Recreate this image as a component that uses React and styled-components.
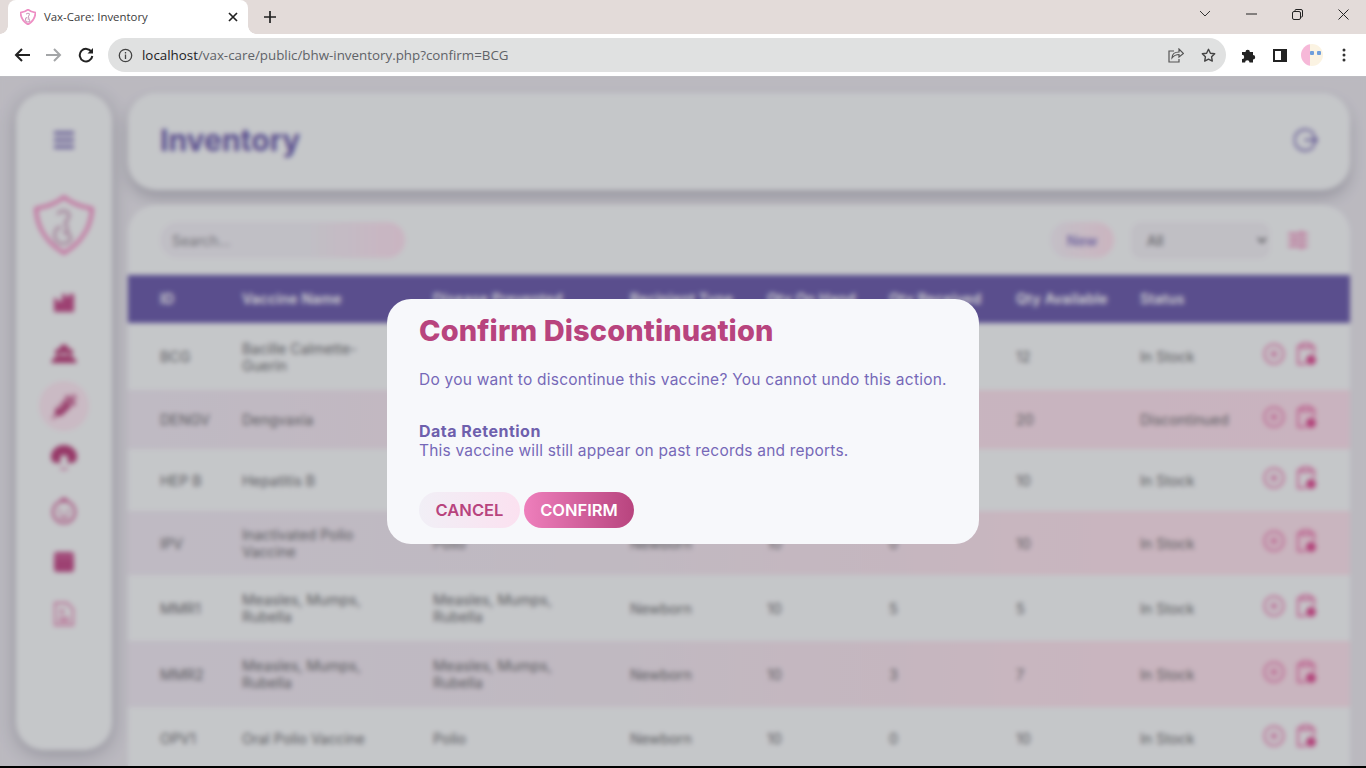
import React from 'react';
import styled, { createGlobalStyle, css } from 'styled-components';
import { FaSyringe } from 'react-icons/fa';

const PINK = '#ee7fbc';
const ROSE = '#b8447e';
const VIOLET = '#6e60ad';

const Global = createGlobalStyle`
  html, body { margin: 0; padding: 0; height: 100%; overflow: hidden; background: #000; }
  * { box-sizing: border-box; }
  body { font-family: Inter, "Liberation Sans", sans-serif; }
`;

const Shell = styled.div`
  width: 1366px;
  height: 766px;
  display: flex;
  flex-direction: column;
  overflow: hidden;
`;

/* browser chrome */
const TabStrip = styled.div`
  height: 34px;
  background: #e3dbd9;
  display: flex;
  align-items: flex-end;
  padding-left: 8px;
  flex: none;
`;
const Tab = styled.div`
  position: relative;
  width: 240px;
  height: 34px;
  background: #fff;
  border-radius: 8px 8px 0 0;
  display: flex;
  align-items: center;
  padding: 0 10px 0 12px;
  gap: 8px;
  font: 11.4px "Open Sans", "Liberation Sans", sans-serif;
  color: #3c3c3c;
  &::before,
  &::after {
    content: '';
    position: absolute;
    bottom: 0;
    width: 8px;
    height: 8px;
  }
  &::before {
    left: -8px;
    background: radial-gradient(circle at 0 0, #e3dbd9 7.5px, #fff 8px);
  }
  &::after {
    right: -8px;
    background: radial-gradient(circle at 100% 0, #e3dbd9 7.5px, #fff 8px);
  }
`;
const TabTitle = styled.span`
  flex: 1;
  padding-bottom: 2px;
`;
const NewTab = styled.div`
  width: 20px;
  height: 34px;
  margin-left: 12px;
  display: flex;
  align-items: center;
  justify-content: center;
`;
const WindowControls = styled.div`
  margin-left: auto;
  height: 34px;
  display: flex;
  align-items: flex-start;
`;
const WinButton = styled.div`
  width: 46px;
  height: 28px;
  display: flex;
  align-items: center;
  justify-content: center;
`;
const Toolbar = styled.div`
  height: 42px;
  background: #fff;
  display: flex;
  align-items: center;
  padding: 0 0 0 6px;
  flex: none;
`;
const NavButton = styled.div`
  width: 32px;
  height: 32px;
  display: flex;
  align-items: center;
  justify-content: center;
`;
const AddressBar = styled.div`
  width: 1118px;
  height: 34px;
  margin-left: 6px;
  border-radius: 17px;
  background: #e0e1e1;
  display: flex;
  align-items: center;
  padding: 0 2px 0 10px;
`;
const Url = styled.div`
  flex: 1;
  margin-left: 9px;
  font: 13.35px "Open Sans", "Liberation Sans", sans-serif;
  color: #5f6368;
  white-space: nowrap;
  b { font-weight: 400; color: #202124; }
`;
const BarIcon = styled.div`
  width: 32px;
  height: 28px;
  display: flex;
  align-items: center;
  justify-content: center;
`;
const Extensions = styled.div`
  display: flex;
  align-items: center;
  margin-left: 6px;
`;
const ExtIcon = styled.div`
  width: 32px;
  height: 32px;
  display: flex;
  align-items: center;
  justify-content: center;
`;
const Avatar = styled.div`
  width: 22px;
  height: 22px;
  border-radius: 50%;
  background: linear-gradient(90deg, #f6b8d8 0 42%, #fbf3e2 42%);
  position: relative;
  &::after {
    content: '';
    position: absolute;
    left: 9px;
    top: 6px;
    width: 11px;
    height: 6px;
    background: radial-gradient(circle at 2px 3px, #6f9fdc 2px, transparent 2.5px),
      radial-gradient(circle at 9px 3px, #6f9fdc 2px, transparent 2.5px);
  }
`;

/* dashboard */
const Viewport = styled.div`
  position: relative;
  flex: 1;
  min-height: 0;
  overflow: hidden;
  border-top: 1px solid #bdbdc2;
`;
const Page = styled.div`
  height: 100%;
  background: #e4e2ea;
  padding: 16px 16px 0;
  display: flex;
  gap: 16px;
  align-items: flex-start;
`;
const Sidebar = styled.aside`
  width: 96px;
  height: 657px;
  flex: none;
  background: #f1f3f6;
  border-radius: 28px;
  box-shadow: 0 4px 18px rgba(60, 60, 80, 0.3);
  display: flex;
  flex-direction: column;
  align-items: center;
  padding-top: 38px;
  color: ${VIOLET};
`;
const Logo = styled.div`
  margin: 46px 0 17px;
  height: 64px;
`;
const NavSlot = styled.div`
  width: 50px;
  height: 52px;
  display: flex;
  align-items: center;
  justify-content: center;
  color: ${ROSE};
  font-size: 25px;
  ${(p) =>
    p.$active &&
    css`
      background: #f7e3ef;
      border-radius: 50%;
      height: 50px;
      margin: 1px 0;
    `}
`;
const Main = styled.main`
  width: 1222px;
  flex: none;
  display: flex;
  flex-direction: column;
  gap: 15px;
`;
const HeaderCard = styled.header`
  height: 97px;
  background: #f1f3f6;
  border-radius: 28px;
  box-shadow: 0 8px 14px rgba(60, 60, 80, 0.24);
  display: flex;
  align-items: center;
  justify-content: space-between;
  padding: 0 32px 4px 32px;
`;
const PageTitle = styled.h1`
  margin: 0;
  font: 700 30px Inter, sans-serif;
  color: ${VIOLET};
`;
const ListCard = styled.section`
  background: #f1f3f6;
  border-radius: 28px 28px 0 0;
`;
const ListTools = styled.div`
  height: 70px;
  display: flex;
  align-items: center;
  padding: 0 42px 0 32px;
`;
const Search = styled.input`
  width: 245px;
  height: 36px;
  border: 0;
  outline: 0;
  border-radius: 18px;
  padding: 0 12px;
  background: linear-gradient(90deg, #ebe9f1 60%, #f7dcec);
  font: 14px Inter, sans-serif;
  &::placeholder { color: #8a8a90; }
`;
const NewButton = styled.div`
  margin-left: auto;
  width: 64px;
  height: 36px;
  border-radius: 18px;
  background: linear-gradient(90deg, #eeeaf3, #f8dcea);
  color: #8b7ec4;
  font: 600 14px Inter, sans-serif;
  display: flex;
  align-items: center;
  justify-content: center;
`;
const Select = styled.select`
  width: 139px;
  height: 37px;
  margin: 0 18px 0 17px;
  border: 0;
  border-radius: 10px;
  background: #ebe9f0;
  padding: 0 14px 0 12px;
  font: 14px Inter, sans-serif;
  color: #6a6a70;
`;
const columns = '82px 191px 197px 137px 122px 127px 124px 123px 1fr';
const HeadRow = styled.div`
  height: 48px;
  background: #6e60ad;
  display: grid;
  grid-template-columns: ${columns};
  align-items: center;
  padding: 0 0 2px 32px;
  color: #fff;
  font: 600 14px Inter, sans-serif;
  letter-spacing: 0.2px;
  white-space: nowrap;
`;
const BodyRow = styled.div`
  height: ${(p) => p.$h}px;
  display: grid;
  grid-template-columns: ${columns};
  align-items: center;
  padding-left: 32px;
  font: 14.3px/17px Inter, sans-serif;
  color: #6f6f74;
  ${(p) =>
    p.$alt &&
    css`
      background: linear-gradient(90deg, #e9e3ee, #ebe2ec 40%, #f6dde9 80%);
    `}
  ${(p) =>
    p.$gone &&
    css`
      background: linear-gradient(90deg, #e9e3ee, #f4dde9 60%, #f6dbe9);
    `}
`;
const WrapCell = styled.span`
  max-width: 132px;
`;
const Actions = styled.div`
  display: flex;
  align-items: center;
  gap: 10px;
  margin-top: -5px;
`;

/* dialog */
const Backdrop = styled.div`
  position: absolute;
  inset: 0;
  background: rgba(0, 0, 0, 0.18);
  backdrop-filter: blur(2.5px);
  display: flex;
  align-items: center;
  justify-content: center;
`;
const Dialog = styled.div`
  width: 592px;
  height: 245px;
  background: #f7f8fb;
  border-radius: 24px;
  padding: 14px 32px 16px;
  display: flex;
  flex-direction: column;
`;
const DialogTitle = styled.h2`
  margin: 0;
  font: 800 29px/36px Inter, sans-serif;
  letter-spacing: 0.1px;
  color: ${ROSE};
`;
const DialogText = styled.p`
  margin: 21px 0 0;
  font: 400 15.5px/20px Inter, sans-serif;
  letter-spacing: 0.23px;
  color: #7668b8;
  white-space: nowrap;
`;
const Retention = styled.div`
  margin-top: 31px;
  font: 400 15.5px/20px Inter, sans-serif;
  letter-spacing: 0.2px;
  color: #7668b8;
  white-space: nowrap;
  strong {
    display: block;
    font-size: 16px;
    font-weight: 700;
    letter-spacing: 0.5px;
    color: ${VIOLET};
  }
`;
const DialogButtons = styled.div`
  display: flex;
  gap: 4px;
  margin-top: auto;
`;
const Pill = styled.button`
  height: 36px;
  border: 0;
  border-radius: 18px;
  padding: 0;
  width: ${(p) => p.$w}px;
  font: 600 16.5px Inter, sans-serif;
  color: ${(p) => (p.$primary ? '#fff' : ROSE)};
  background: ${(p) =>
    p.$primary
      ? `linear-gradient(90deg, ${PINK}, ${ROSE})`
      : 'linear-gradient(90deg, #f1eff6, #fbe1f0)'};
`;

const rows = [
  { id: 'BCG', name: 'Bacille Calmette-Guerin', dis: 'Tuberculosis', type: 'Newborn', hand: 12, rec: 0, av: 12, st: 'In Stock', h: 67 },
  { id: 'DENGV', name: 'Dengvaxia', dis: 'Dengue', type: 'Children', hand: 20, rec: 0, av: 20, st: 'Discontinued', h: 59, gone: true },
  { id: 'HEP B', name: 'Hepatitis B', dis: 'Hepatitis B', type: 'Newborn', hand: 10, rec: 0, av: 10, st: 'In Stock', h: 62 },
  { id: 'IPV', name: 'Inactivated Polio Vaccine', dis: 'Polio', type: 'Newborn', hand: 10, rec: 0, av: 10, st: 'In Stock', h: 64, alt: true },
  { id: 'MMR1', name: 'Measles, Mumps, Rubella', dis: 'Measles, Mumps, Rubella', type: 'Newborn', hand: 10, rec: 5, av: 5, st: 'In Stock', h: 66 },
  { id: 'MMR2', name: 'Measles, Mumps, Rubella', dis: 'Measles, Mumps, Rubella', type: 'Newborn', hand: 10, rec: 3, av: 7, st: 'In Stock', h: 66, alt: true },
  { id: 'OPV1', name: 'Oral Polio Vaccine', dis: 'Polio', type: 'Newborn', hand: 10, rec: 0, av: 10, st: 'In Stock', h: 62 },
];

const Shield = ({ size, stroke, weight, inner }) => (
  <svg width={size} height={size} viewBox="0 0 62 62" fill="none" stroke={stroke} strokeLinejoin="round">
    <path d="M31 2 C38 8 48 12 60 14 C59 34 48 50 31 60 C14 50 3 34 2 14 C14 12 24 8 31 2Z" strokeWidth={weight} />
    <path d="M25 19 C31 13 41 19 34 26 C29 30 37 33 34 39 M27 33 C17 37 21 52 32 50 C41 48 39 39 31 39" strokeWidth={inner} strokeLinecap="round" stroke="#c9a0bc" />
  </svg>
);

const AddIcon = () => (
  <svg width="22" height="22" viewBox="0 0 22 22" fill="none" stroke={'#e46fa9'} strokeWidth="1.8" strokeLinecap="round">
    <circle cx="11" cy="11" r="9.6" />
    <path d="M11 7.500v7M7.500 11h7" />
  </svg>
);

const DiscontinueIcon = () => (
  <svg width="22" height="24" viewBox="0 0 22 24" fill="none" stroke={'#e46fa9'} strokeWidth="2" strokeLinejoin="round">
    <path d="M7 4H3v18h8M15 4h4v8" />
    <path d="M7 6V1.500h8V6z" />
    <circle cx="16" cy="18" r="5" fill={'#d94f93'} stroke="none" />
  </svg>
);

const LogoutIcon = () => (
  <svg width="24" height="24" viewBox="0 0 24 24" fill="none" stroke={VIOLET} strokeWidth="1.800" strokeLinecap="round" strokeLinejoin="round">
    <path d="M20 6.500a10.500 10.500 0 1 0 0 11" />
    <path d="M11 12h12M19.500 8.500 23 12l-3.500 3.500" />
  </svg>
);

const ChartIcon = () => (
  <svg width="20" height="20" viewBox="0 0 20 20" fill="#c0508c">
    <path d="M0 20V6h3v3h5V2h4v3h3V2h5v18z" />
  </svg>
);

const PeopleIcon = () => (
  <svg width="26" height="20" viewBox="0 0 26 20" fill={ROSE}>
    <circle cx="13" cy="5" r="4.500" />
    <circle cx="7" cy="8" r="3" />
    <circle cx="19" cy="8" r="3" />
    <path d="M0 19c1-3 2-4 4-6 2-2 16-2 18 0 2 2 3 3 4 6z" />
  </svg>
);

const MotherIcon = () => (
  <svg width="26" height="28" viewBox="0 0 26 28">
    <path fill={ROSE} d="M13 1C6 1 0 6 0 13c0 4 3 6 6 6h14c3 0 6-2 6-6 0-7-6-12-13-12z" />
    <ellipse cx="13" cy="15.500" rx="4" ry="4.500" fill="#f1f3f6" />
    <path d="M9 24c3 2 5 2 8 0" stroke="#d98bb5" strokeWidth="2" fill="none" />
  </svg>
);

const BabyIcon = () => (
  <svg width="26" height="28" viewBox="0 0 26 28" fill="none" stroke="#cf6a9f" strokeWidth="2.400">
    <circle cx="13" cy="16" r="11" />
    <path d="M10 5c1-3 5-3 6 0" />
    <circle cx="9" cy="15" r="1.500" fill="#cf6a9f" stroke="none" />
    <circle cx="17" cy="15" r="1.500" fill="#cf6a9f" stroke="none" />
    <path d="M9 20c2 2 6 2 8 0" />
  </svg>
);

const PlannerIcon = () => (
  <svg width="20" height="20" viewBox="0 0 20 20">
    <rect width="20" height="20" rx="3" fill="#c0508c" />
    <path d="M0 5h20" stroke="#e39ac0" strokeWidth="1" />
  </svg>
);

const ReportIcon = () => (
  <svg width="20" height="24" viewBox="0 0 20 24" fill="none" stroke="#e07fb0" strokeWidth="1.800">
    <path d="M1 1h12l6 6v16H1z" />
    <path d="M5 16h10M5 19h10M8 7v5M5.500 9.500h5" />
  </svg>
);

const SlidersIcon = () => (
  <svg width="20" height="20" viewBox="0 0 20 20" fill="none" stroke="#e46fa9" strokeWidth="2" strokeLinecap="round">
    <path d="M1 4h10M16 4h3M1 10h3M9 10h10M1 16h10M16 16h3" />
    <path d="M13.500 1.500v5M6.500 7.500v5M13.500 13.500v5" />
  </svg>
);

const PuzzleIcon = () => (
  <svg width="17" height="17" viewBox="0 0 17 17" fill="#222">
    <path d="M2 5h3.500a2.200 2.200 0 1 1 4.400 0H13v3a2.200 2.200 0 1 1 0 4.400v3.100H9.500a2.200 2.200 0 1 0-4.400 0H2v-3.400a2.200 2.200 0 1 0 0-4.400z" />
  </svg>
);

export default function App() {
  return (
    <Shell>
      <Global />
      <TabStrip>
        <Tab>
          <Shield size={16} stroke="#ee8fc4" weight={7} inner={4} />
          <TabTitle>Vax-Care: Inventory</TabTitle>
          <svg width="10" height="10" viewBox="0 0 10 10" stroke="#222" strokeWidth="1.700">
            <path d="M1 1l8 8M9 1l-8 8" />
          </svg>
        </Tab>
        <NewTab>
          <svg width="12" height="12" viewBox="0 0 12 12" stroke="#222" strokeWidth="1.700">
            <path d="M6 0v12M0 6h12" />
          </svg>
        </NewTab>
        <WindowControls>
          <WinButton>
            <svg width="12" height="8" viewBox="0 0 12 8" fill="none" stroke="#333">
              <path d="M1 1l5 5 5-5" />
            </svg>
          </WinButton>
          <WinButton>
            <svg width="11" height="2" viewBox="0 0 11 2" stroke="#222">
              <path d="M0 1h11" />
            </svg>
          </WinButton>
          <WinButton>
            <svg width="11" height="11" viewBox="0 0 11 11" fill="none" stroke="#222">
              <rect x="0.500" y="2.500" width="8" height="8" rx="1.500" />
              <path d="M3 2.500V1.500a1 1 0 0 1 1-1h5a1.500 1.500 0 0 1 1.500 1.500v5a1 1 0 0 1-1 1h-1" />
            </svg>
          </WinButton>
          <WinButton>
            <svg width="11" height="11" viewBox="0 0 11 11" stroke="#222">
              <path d="M0.500 0.500l10 10M10.500 0.500l-10 10" />
            </svg>
          </WinButton>
        </WindowControls>
      </TabStrip>

      <Toolbar>
        <NavButton>
          <svg width="16" height="14" viewBox="0 0 16 14" fill="none" stroke="#222" strokeWidth="2">
            <path d="M16 7H2M8 1 2 7l6 6" />
          </svg>
        </NavButton>
        <NavButton>
          <svg width="16" height="14" viewBox="0 0 16 14" fill="none" stroke="#a4a6a8" strokeWidth="2">
            <path d="M0 7h14M8 1l6 6-6 6" />
          </svg>
        </NavButton>
        <NavButton>
          <svg width="16" height="16" viewBox="0 0 16 16" fill="none" stroke="#222" strokeWidth="2">
            <path d="M13.500 5A6.300 6.300 0 1 0 14.300 9" />
            <path d="M15 1v5.500H9.500z" fill="#222" stroke="none" />
          </svg>
        </NavButton>
        <AddressBar>
          <svg width="15" height="15" viewBox="0 0 15 15" fill="none" stroke="#444" strokeWidth="1.300">
            <circle cx="7.500" cy="7.500" r="6.200" />
            <path d="M7.500 6.500v4.500M7.500 4v1.500" />
          </svg>
          <Url>
            <b>localhost</b>/vax-care/public/bhw-inventory.php?confirm=BCG
          </Url>
          <BarIcon>
            <svg width="16" height="15" viewBox="0 0 16 15" fill="none" stroke="#555" strokeWidth="1.200">
              <path d="M6 3H1v11h10v-3" />
              <path d="M4 10c0-4 3-6 7-6V1l4.500 4.500L11 9V6.500c-3 0-5 1-7 3.500z" />
            </svg>
          </BarIcon>
          <BarIcon>
            <svg width="15" height="15" viewBox="0 0 15 15" fill="none" stroke="#444" strokeWidth="1.400" strokeLinejoin="round">
              <path d="M7.500 1.300l1.900 3.900 4.300.6-3.100 3 .7 4.300-3.800-2-3.800 2 .7-4.300-3.100-3 4.300-.6z" />
            </svg>
          </BarIcon>
        </AddressBar>
        <Extensions>
          <ExtIcon>
            <PuzzleIcon />
          </ExtIcon>
          <ExtIcon>
            <svg width="14" height="13" viewBox="0 0 14 13">
              <rect width="14" height="13" fill="#222" />
              <rect x="2" y="2" width="6" height="9" fill="#fff" />
            </svg>
          </ExtIcon>
          <ExtIcon>
            <Avatar />
          </ExtIcon>
          <ExtIcon>
            <svg width="4" height="14" viewBox="0 0 4 14" fill="#333">
              <circle cx="2" cy="2" r="1.500" />
              <circle cx="2" cy="7" r="1.500" />
              <circle cx="2" cy="12" r="1.500" />
            </svg>
          </ExtIcon>
        </Extensions>
      </Toolbar>

      <Viewport>
        <Page>
          <Sidebar>
            <svg width="20" height="18" viewBox="0 0 20 18" stroke={VIOLET} strokeWidth="3">
              <path d="M0 2h20M0 9h20M0 16h20" />
            </svg>
            <Logo>
              <Shield size={60} stroke={PINK} weight={3.5} inner={3} />
            </Logo>
            <NavSlot><ChartIcon /></NavSlot>
            <NavSlot><PeopleIcon /></NavSlot>
            <NavSlot $active><FaSyringe /></NavSlot>
            <NavSlot><MotherIcon /></NavSlot>
            <NavSlot><BabyIcon /></NavSlot>
            <NavSlot><PlannerIcon /></NavSlot>
            <NavSlot><ReportIcon /></NavSlot>
          </Sidebar>
          <Main>
            <HeaderCard>
              <PageTitle>Inventory</PageTitle>
              <LogoutIcon />
            </HeaderCard>
            <ListCard>
              <ListTools>
                <Search placeholder="Search..." readOnly />
                <NewButton>New</NewButton>
                <Select defaultValue="All">
                  <option>All</option>
                </Select>
                <SlidersIcon />
              </ListTools>
              <HeadRow>
                <span>ID</span>
                <span>Vaccine Name</span>
                <span>Disease Prevented</span>
                <span>Recipient Type</span>
                <span>Qty On Hand</span>
                <span>Qty Received</span>
                <span>Qty Available</span>
                <span>Status</span>
                <span />
              </HeadRow>
              {rows.map((r) => (
                <BodyRow key={r.id} $h={r.h} $alt={r.alt} $gone={r.gone}>
                  <span>{r.id}</span>
                  <WrapCell>{r.name}</WrapCell>
                  <WrapCell>{r.dis}</WrapCell>
                  <span>{r.type}</span>
                  <span>{r.hand}</span>
                  <span>{r.rec}</span>
                  <span>{r.av}</span>
                  <span>{r.st}</span>
                  <Actions>
                    <AddIcon />
                    <DiscontinueIcon />
                  </Actions>
                </BodyRow>
              ))}
            </ListCard>
          </Main>
        </Page>
        <Backdrop>
          <Dialog>
            <DialogTitle>Confirm Discontinuation</DialogTitle>
            <DialogText>Do you want to discontinue this vaccine? You cannot undo this action.</DialogText>
            <Retention>
              <strong>Data Retention</strong>
              This vaccine will still appear on past records and reports.
            </Retention>
            <DialogButtons>
              <Pill $w={101}>CANCEL</Pill>
              <Pill $w={110} $primary>CONFIRM</Pill>
            </DialogButtons>
          </Dialog>
        </Backdrop>
      </Viewport>
    </Shell>
  );
}
